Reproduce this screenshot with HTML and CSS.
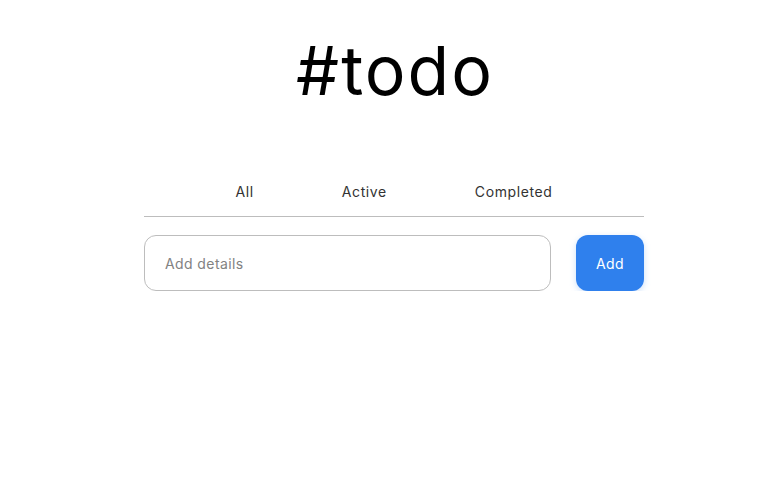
FILE: index.html
```html
<!DOCTYPE html>
<html lang="en">
<head>
<meta charset="utf-8">
<title>#todo</title>
<link rel="stylesheet" href="styles.css">
</head>
<body>
<main class="app">
  <h1 class="title">#todo</h1>
  <nav class="tabs">
    <span class="tab">All</span>
    <span class="tab">Active</span>
    <span class="tab">Completed</span>
  </nav>
  <form class="add-form">
    <input class="add-input" type="text" placeholder="Add details">
    <button class="add-btn" type="button">Add</button>
  </form>
</main>
</body>
</html>
```
FILE: styles.css
```css
html, body {
  margin: 0;
  padding: 0;
  background: #fff;
}
body {
  padding: 0 8px 0 16px;
  font-family: "Inter", "Open Sans", sans-serif;
  color: #333;
}
.app {
  width: 500px;
  margin: 0 auto;
  display: flex;
  flex-direction: column;
}
.title {
  margin: 0;
  padding-top: 30px;
  padding-left: 2px;
  height: 110px;
  box-sizing: border-box;
  text-align: center;
  font-weight: 400;
  font-size: 68px;
  line-height: 80px;
  color: #000;
  letter-spacing: 2px;
}
.tabs {
  margin-top: 64px;
  display: flex;
  justify-content: center;
  gap: 88px;
  height: 43px;
  border-bottom: 1px solid #bdbdbd;
  box-sizing: border-box;
}
.tab {
  font-size: 14px;
  line-height: 17px;
  padding-top: 9px;
  color: #333;
  letter-spacing: 0.6px;
}
.add-form {
  margin-top: 18px;
  display: flex;
  gap: 25px;
}
.add-input {
  flex: 1;
  height: 56px;
  box-sizing: border-box;
  border: 1px solid #bdbdbd;
  border-radius: 12px;
  padding: 0 20px;
  font-family: inherit;
  font-size: 14px;
  letter-spacing: 0.4px;
  color: #333;
  outline: none;
}
.add-input::placeholder {
  color: #828282;
}
.add-btn {
  width: 68px;
  height: 56px;
  border: none;
  border-radius: 12px;
  background: #2f80ed;
  color: #fff;
  font-family: inherit;
  font-size: 14px;
  letter-spacing: 0.4px;
  box-shadow: 0 2px 6px rgba(127, 177, 243, 0.4);
}
```
